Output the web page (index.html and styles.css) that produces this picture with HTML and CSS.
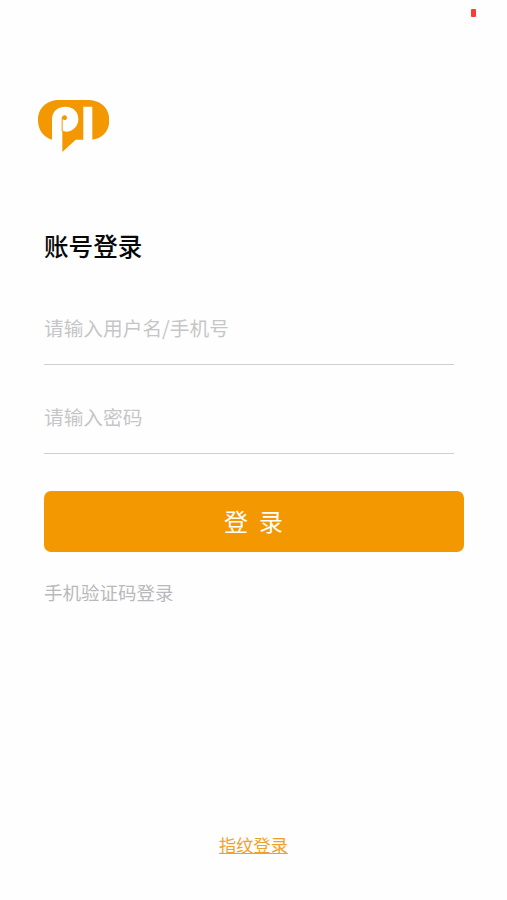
FILE: index.html
```html
<!DOCTYPE html>
<html lang="zh-CN">
<head>
<meta charset="utf-8">
<meta name="viewport" content="width=device-width, initial-scale=1">
<title>账号登录</title>
<link rel="stylesheet" href="styles.css">
</head>
<body>
<main class="screen">
  <div class="status"><span class="battery"></span></div>
  <svg class="logo" viewBox="24 30 214 156" aria-hidden="true">
    <path fill="#f39800" d="M88 30H174C212 30 238 54 238 90C238 123 218 144 187 149V50H160V149H137L97 186V121C101 124 104 125 108 125C129 125 145 109 145 87C145 65 130 50 106 50C82 50 66 65 66 89V149C39 141 24 119 24 90C24 54 50 30 88 30Z"/>
    <path fill="#f39800" d="M95 124V86C95 80 99 76 104 76C108 76 111 79 111 83C111 87 108 90 104 90C101 90 99 89 98 88V124Z"/>
  </svg>
  <h1 class="title">账号登录</h1>
  <form class="form">
    <input class="field" type="text" placeholder="请输入用户名/手机号">
    <input class="field" type="password" placeholder="请输入密码">
    <button class="submit" type="button">登 录</button>
  </form>
  <a class="sms">手机验证码登录</a>
  <a class="finger">指纹登录</a>
</main>
</body>
</html>
```
FILE: styles.css
```css
* { box-sizing: border-box; }
body {
  margin: 0;
  background: #fefefe;
  font-family: "Noto Sans CJK SC", sans-serif;
}
.screen {
  display: flex;
  flex-direction: column;
  align-items: flex-start;
  height: 900px;
  padding: 0 43px 0 44px;
}
.status {
  display: flex;
  justify-content: flex-end;
  width: 100%;
  height: 100px;
  padding-top: 9px;
}
.battery {
  width: 5px;
  height: 8px;
  margin-right: -12px;
  border-radius: 1px;
  background: #fb3b36;
}
.logo {
  display: block;
  width: 71.3px;
  height: 52px;
  margin-left: -6px;
}
.title {
  margin: 75px 0 0;
  font-size: 24.6px;
  line-height: 36px;
  font-weight: 500;
  color: #080808;
}
.form {
  display: flex;
  flex-direction: column;
  width: 100%;
  margin-top: 29px;
}
.field {
  width: 410px;
  height: 73px;
  margin-bottom: 16px;
  padding: 0 0 2px;
  border: 0;
  border-bottom: 1px solid #cfcfd1;
  border-radius: 0;
  background: none;
  font: 19.7px "Noto Sans CJK SC", sans-serif;
  outline: 0;
}
.field::placeholder { color: #c6c6c8; opacity: 1; }
.submit {
  width: 420px;
  height: 61px;
  margin-top: 21px;
  padding: 0 1px 3px 0;
  border: 0;
  border-radius: 7px;
  background: #f39800;
  color: #fff;
  font: 24px "Noto Sans CJK SC", sans-serif;
  word-spacing: 5.5px;
}
.sms {
  margin-top: 26px;
  font-size: 18.5px;
  line-height: 28px;
  color: #b9b9bb;
}
.finger {
  align-self: center;
  margin-top: auto;
  margin-right: 1px;
  margin-bottom: 42px;
  font-size: 17.2px;
  line-height: 26px;
  color: #f3a126;
  text-decoration: underline;
}
```
